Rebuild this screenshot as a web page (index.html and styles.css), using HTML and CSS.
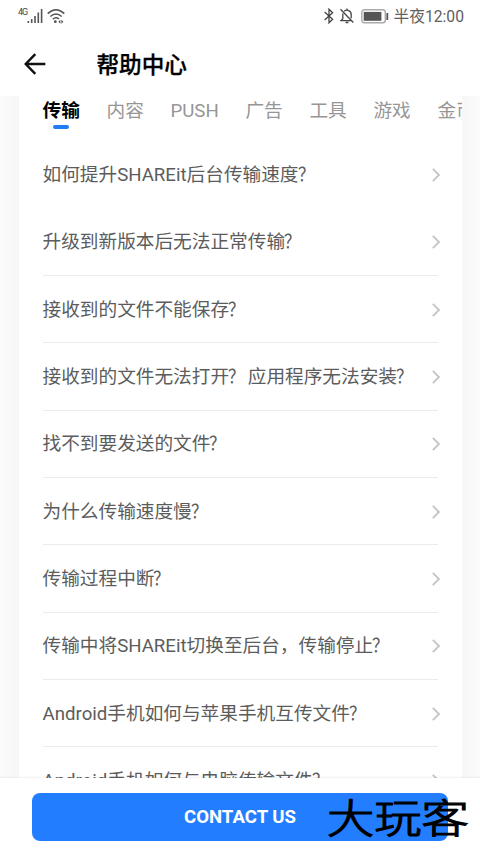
FILE: index.html
```
<!DOCTYPE html>
<html lang="zh-CN">
<head>
<meta charset="utf-8">
<title>帮助中心</title>
<link rel="stylesheet" href="styles.css">
</head>
<body>
<div class="screen">
  <header class="top">
    <div class="status">
      <span class="network">4G</span>
      <svg class="signal" width="16" height="15" viewBox="0 0 16 15"><path d="M1.3 12v2M4.7 10v4M8 7v7M11.3 3.5V14M14.6 0v14" stroke="#555" stroke-width="1.6" fill="none"/></svg>
      <svg class="wifi" width="18" height="15" viewBox="0 0 18 15" fill="none" stroke="#555" stroke-width="1.5"><path d="M.7 4.6Q9-3 17.3 4.6M3.3 7.5Q9 2.4 14.7 7.5M5.8 10.2Q9 7.4 12 10"/><circle cx="8.3" cy="12.7" r="1.4" fill="#555" stroke="none"/><path d="m13.4 10.7-2 2 2 2zM14.4 10.7l2 2-2 2z" fill="#555" stroke="none"/></svg>
      <div class="status-right">
        <svg width="10" height="16" viewBox="0 0 10 16" fill="none" stroke="#444" stroke-width="1.3"><path d="m.6 4 8 7.3L5 14.8V1.2l3.6 3.5-8 7.3"/></svg>
        <svg class="bell" width="14" height="16" viewBox="0 0 14 16" fill="none" stroke="#444" stroke-width="1.3"><path d="M4.2 3.3C6.9.9 11.2 2.8 11.2 6.5v3.7M2.8 5.5v5.3L1 12.7h10.2M7 .5v2M.5 1.3l12.8 13.2M5.6 14.5h2.8"/></svg>
        <svg class="battery" width="28" height="15" viewBox="0 0 28 15"><rect x=".8" y=".8" width="23.5" height="13" rx="2.5" fill="#fff" stroke="#aaa" stroke-width="1.4"/><rect x="2.7" y="2.9" width="17.7" height="8.9" fill="#555"/><path d="M26.3 4v7" stroke="#555" stroke-width="1.8"/></svg>
        <span class="time">半夜12:00</span>
      </div>
    </div>
    <div class="title-bar">
      <svg width="22" height="22" viewBox="0 0 22 22" fill="none" stroke="#111" stroke-width="2.4"><path d="M21.3 11H2M11.3 1.2 1.7 11l9.6 9.8"/></svg>
      <h1>帮助中心</h1>
    </div>
  </header>
  <main class="content">
    <section class="card">
      <nav class="tabs">
        <span class="tab active">传输</span><span class="tab">内容</span><span class="tab">PUSH</span><span class="tab">广告</span><span class="tab">工具</span><span class="tab">游戏</span><span class="tab">金币</span>
      </nav>
      <ul class="list">
        <li class="plain"><span>如何提升SHAREit后台传输速度<i>？</i></span><svg class="chevron" viewBox="0 0 8 14"><path d="m.8.8 6.2 6.2-6.2 6.2"/></svg></li>
        <li><span>升级到新版本后无法正常传输<i>？</i></span><svg class="chevron" viewBox="0 0 8 14"><path d="m.8.8 6.2 6.2-6.2 6.2"/></svg></li>
        <li><span>接收到的文件不能保存<i>？</i></span><svg class="chevron" viewBox="0 0 8 14"><path d="m.8.8 6.2 6.2-6.2 6.2"/></svg></li>
        <li><span>接收到的文件无法打开<i>？</i>应用程序无法安装<i>？</i></span><svg class="chevron" viewBox="0 0 8 14"><path d="m.8.8 6.2 6.2-6.2 6.2"/></svg></li>
        <li><span>找不到要发送的文件<i>？</i></span><svg class="chevron" viewBox="0 0 8 14"><path d="m.8.8 6.2 6.2-6.2 6.2"/></svg></li>
        <li><span>为什么传输速度慢<i>？</i></span><svg class="chevron" viewBox="0 0 8 14"><path d="m.8.8 6.2 6.2-6.2 6.2"/></svg></li>
        <li><span>传输过程中断<i>？</i></span><svg class="chevron" viewBox="0 0 8 14"><path d="m.8.8 6.2 6.2-6.2 6.2"/></svg></li>
        <li><span>传输中将SHAREit切换至后台，传输停止<i>？</i></span><svg class="chevron" viewBox="0 0 8 14"><path d="m.8.8 6.2 6.2-6.2 6.2"/></svg></li>
        <li><span>Android手机如何与苹果手机互传文件<i>？</i></span><svg class="chevron" viewBox="0 0 8 14"><path d="m.8.8 6.2 6.2-6.2 6.2"/></svg></li>
        <li><span>Android手机如何与电脑传输文件<i>？</i></span><svg class="chevron" viewBox="0 0 8 14"><path d="m.8.8 6.2 6.2-6.2 6.2"/></svg></li>
      </ul>
    </section>
  </main>
  <footer class="bottom">
    <button class="contact">CONTACT US</button>
    <div class="watermark">大玩客</div>
  </footer>
</div>
</body>
</html>
```
FILE: styles.css
```
* { box-sizing: border-box; }
body {
  margin: 0;
  background: #fff;
  font-family: Roboto, "Noto Sans CJK SC", sans-serif;
}
.screen {
  width: 480px;
  height: 853px;
  display: flex;
  flex-direction: column;
  overflow: hidden;
}
.top { height: 96px; flex: none; }
.status {
  height: 32px;
  display: flex;
  align-items: center;
  padding: 0 16px 0 18px;
}
.network {
  font-size: 9px;
  line-height: 9px;
  width: 9px;
  letter-spacing: -1px;
  color: #444;
  margin-top: -7px;
}
.wifi { margin-left: 4px; }
.status-right {
  margin-left: auto;
  display: flex;
  align-items: center;
}
.bell { margin-left: 6px; }
.battery { margin: 0 5px 0 7px; }
.time { font-size: 15.7px; line-height: 20px; color: #606060; margin-top: 2px; white-space: nowrap; }
.title-bar {
  height: 64px;
  display: flex;
  align-items: center;
  padding-left: 24px;
}
.title-bar h1 {
  margin: 3px 0 0 50.5px;
  font-size: 22.6px;
  line-height: 32px;
  font-weight: 500;
  color: #000;
  -webkit-text-stroke: .3px #000;
}
.content {
  height: 682px;
  flex: none;
  overflow: hidden;
  padding: 0 18.5px;
  background: linear-gradient(90deg, #fbfbfb, #f7f7f7 18px, #f7f7f7 462px, #fbfbfb);
}
.card { background: #fff; overflow: hidden; }
.tabs {
  height: 45.4px;
  display: flex;
  gap: 26.7px;
  padding-left: 24px;
  overflow: hidden;
}
.tab {
  flex: none;
  height: 33px;
  font-size: 18.67px;
  line-height: 31px;
  font-weight: 400;
  color: #969696;
}
.active {
  display: flex;
  flex-direction: column;
  align-items: center;
  font-weight: 700;
  color: #000;
}
.active::after {
  content: "";
  width: 16px;
  height: 4px;
  margin-top: -2px;
  border-radius: 2px;
  background: #227cf5;
}
.list {
  list-style: none;
  margin: 0;
  padding: 0 24px;
}
.list li {
  height: 67.33px;
  display: flex;
  align-items: center;
  justify-content: space-between;
  border-bottom: 1px solid #ebebeb;
  font-size: 18.67px;
  line-height: 28px;
  color: #5c5c5c;
  white-space: nowrap;
}
.list span { margin-top: 1px; }
.list i {
  display: inline-block;
  width: 1em;
  font-style: normal;
  transform: translateX(-1px) scaleX(.88);
  transform-origin: left;
}
.list .plain { border-color: transparent; }
.chevron {
  width: 8px;
  height: 14px;
  margin-right: -2.5px;
  margin-top: 1px;
  flex: none;
  overflow: visible;
  fill: none;
  stroke: #c4c4c4;
  stroke-width: 1.8;
}
.bottom {
  position: relative;
  height: 75px;
  flex: none;
  padding: 15px 32px 0;
  background: #fff;
  box-shadow: 0 -1px 2px rgba(0, 0, 0, .06);
}
.contact {
  display: block;
  width: 100%;
  height: 48px;
  border: 0;
  border-radius: 8px;
  background: #237eff;
  color: #fff;
  font: 700 18.6px/47px Roboto, sans-serif;
  padding: 0;
}
.watermark {
  position: absolute;
  left: 327px;
  top: 11px;
  font: 300 47.3px/54px "Noto Sans CJK SC", sans-serif;
  color: #000;
  -webkit-text-stroke: 1.5px #000;
  stroke-linejoin: round;
  transform: scaleY(.83);
  white-space: nowrap;
}
```
